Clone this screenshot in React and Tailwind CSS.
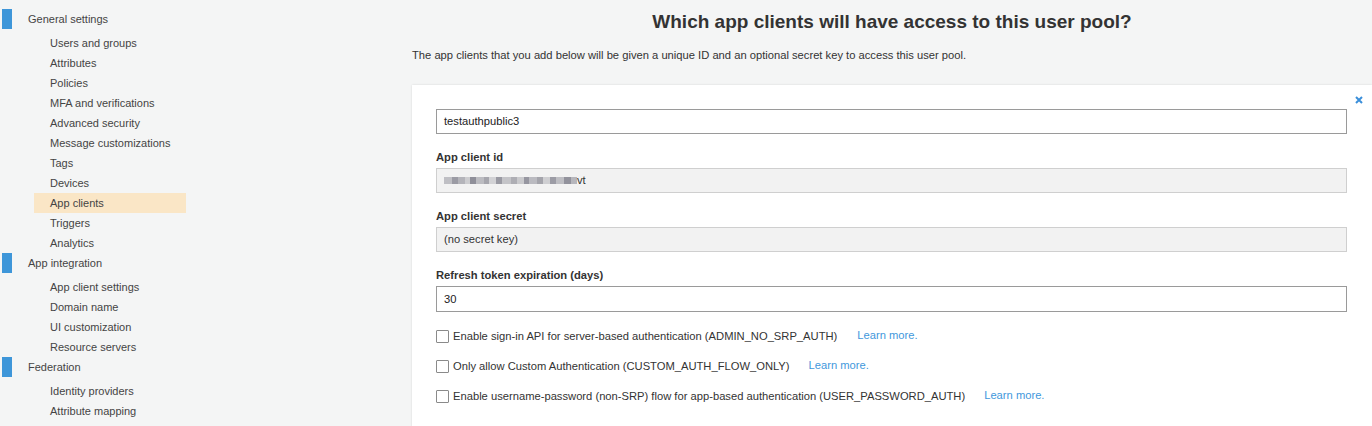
const sections = [
  {
    title: "General settings",
    items: [
      "Users and groups",
      "Attributes",
      "Policies",
      "MFA and verifications",
      "Advanced security",
      "Message customizations",
      "Tags",
      "Devices",
      "App clients",
      "Triggers",
      "Analytics",
    ],
  },
  {
    title: "App integration",
    items: [
      "App client settings",
      "Domain name",
      "UI customization",
      "Resource servers",
    ],
  },
  {
    title: "Federation",
    items: ["Identity providers", "Attribute mapping"],
  },
];

const blurBlocks = [
  ["#bfbfc4", 8],
  ["#9b9ba4", 6],
  ["#b4b4ba", 7],
  ["#cdcdd0", 5],
  ["#8f8f99", 6],
  ["#bcbcc1", 8],
  ["#a6a6ad", 5],
  ["#d2d2d5", 7],
  ["#9a9aa3", 6],
  ["#c4c4c8", 9],
  ["#aeaeb4", 6],
  ["#cacacd", 7],
  ["#9696a0", 5],
  ["#babac0", 8],
  ["#a4a4ab", 6],
  ["#cfcfd2", 7],
  ["#9c9ca5", 6],
  ["#bebec3", 8],
  ["#92929c", 7],
  ["#b6b6bc", 6],
];

function Checkbox({ label, gap }) {
  return (
    <div className="flex h-[30px] items-center">
      <span className="h-[13px] w-[13px] shrink-0 rounded-[1px] border border-[#8a8a8a] bg-white" />
      <span className="ml-[4px] text-[11.2px] text-[#333]">{label}</span>
      <a className={`${gap} -mt-[2px] text-[11.2px] text-[#3f98dc]`}>Learn more.</a>
    </div>
  );
}

export default function App() {
  return (
    <div className="flex min-h-screen bg-[#f4f5f5] font-['Liberation_Sans',Arial,sans-serif] text-[#333]">
      {/* SIDEBAR */}
      <aside className="w-[190px] shrink-0 pt-[9px]">
        {sections.map((s) => (
          <div key={s.title}>
            <div className="flex h-[20px] items-center">
              <span className="ml-[2px] h-[20px] w-[10px] bg-[#3e96d9]" />
              <span className="ml-[16px] text-[11px] text-[#444]">{s.title}</span>
            </div>
            <div className="mt-[4px]">
              {s.items.map((it) => (
                <div
                  key={it}
                  className={`ml-[34px] flex h-[20px] w-[152px] items-center pl-4 text-[11px] text-[#444] ${
                    it === "App clients" ? "bg-[#fae6c6]" : ""
                  }`}
                >
                  {it}
                </div>
              ))}
            </div>
          </div>
        ))}
      </aside>

      {/* MAIN */}
      <main className="ml-[222px] flex-1 pt-[11px]">
        <h1 className="text-center text-[19px] font-bold leading-[22px] text-[#333]">
          Which app clients will have access to this user pool?
        </h1>
        <p className="mt-[15px] text-[11.2px] leading-[14px] text-[#333]">
          The app clients that you add below will be given a unique ID and an optional secret key to access this user pool.
        </p>

        <div className="relative mt-[23px] bg-white pl-6 pr-[25px] pt-6 pb-4 shadow-[0_0_2px_rgba(0,0,0,0.12)]">
          <svg
            className="absolute right-[9px] top-[11px]"
            width="8"
            height="8"
            viewBox="0 0 8 8"
          >
            <path d="M1 1L7 7M7 1L1 7" stroke="#3b8fda" strokeWidth="2" />
          </svg>

          <div className="flex h-[25px] items-center border border-[#9a9a9a] px-[7px] text-[11.2px] text-[#222]">
            testauthpublic3
          </div>

          <div className="mt-[16px] text-[11.2px] font-bold leading-[14px] text-[#333]">App client id</div>
          <div className="mt-[4px] flex h-[25px] items-center border border-[#cfcfcf] bg-[#f2f2f2] px-[7px] text-[11.2px] text-[#333]">
            <span className="flex items-center">
              {blurBlocks.map(([c, w], i) => (
                <span key={i} className="inline-block h-[7px]" style={{ background: c, width: w }} />
              ))}
            </span>
            <span>vt</span>
          </div>

          <div className="mt-[16px] text-[11.2px] font-bold leading-[14px] text-[#333]">App client secret</div>
          <div className="mt-[4px] flex h-[25px] items-center border border-[#cfcfcf] bg-[#f2f2f2] px-[7px] text-[11.2px] text-[#333]">
            (no secret key)
          </div>

          <div className="mt-[16px] text-[11.2px] font-bold leading-[14px] text-[#333]">Refresh token expiration (days)</div>
          <div className="mt-[4px] flex h-[26px] items-center border border-[#9a9a9a] px-[7px] text-[11.2px] text-[#222]">
            30
          </div>

          <div className="mt-[9px]">
            <Checkbox
              label="Enable sign-in API for server-based authentication (ADMIN_NO_SRP_AUTH)"
              gap="ml-[20px]"
            />
            <Checkbox
              label="Only allow Custom Authentication (CUSTOM_AUTH_FLOW_ONLY)"
              gap="ml-[19px]"
            />
            <Checkbox
              label="Enable username-password (non-SRP) flow for app-based authentication (USER_PASSWORD_AUTH)"
              gap="ml-[19px]"
            />
          </div>
        </div>
      </main>
    </div>
  );
}
